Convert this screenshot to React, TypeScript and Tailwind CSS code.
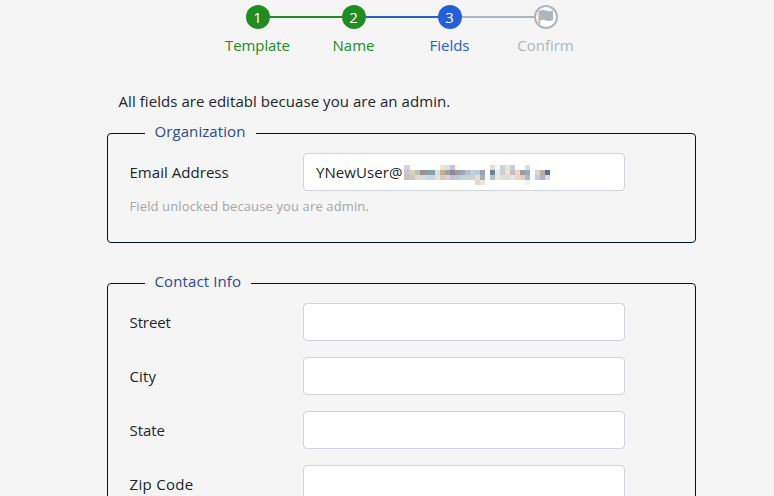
import React from "react";

const mosaic: string[][] = [
  ["#d6cfe0", "", "", "", "", "", "", "#f1e3cc", "#cfe3f3", "#cbc1d0", "#f5fcff", "", "", "", "", "", "", "#e9ddd1", "#fdf6ea", "#c5d5dc", "#e3e3ea", "#c8ced9", "", "", "#cfe3ef", "", "", "", ""],
  ["#c9c5cb", "#dfd2b3", "#b6c2b4", "#a18f8a", "#8b9cac", "#8f9fad", "#d3e2e6", "#c5b094", "#a1a09e", "#8f8896", "#ab9799", "#9aa7c3", "#b2bfcb", "#c6cdd4", "#b5cfdf", "#98a3ad", "", "#6d8091", "#e4edf7", "#cbd3d0", "#f1e3d6", "#c9bcc2", "#e6dad0", "#a39b93", "#9aa9be", "", "#d0d6da", "#c2aba4", "#5b7090"],
  ["#c3bfc2", "#cbc5c3", "#e3dbd3", "#dfd9d9", "#c5d9ed", "#cbd8e4", "#eae4d8", "#dacbb5", "#d1d4dc", "#c8bdd3", "#b8cae1", "#c3d2df", "#cbd2d6", "#c9d2d8", "#e5dfdc", "#a7b1bc", "#f6fbfb", "#b7c3c6", "#e3e8ef", "#e2ddd5", "#dfdcd5", "#e6e6ea", "#f1d3ba", "#ddd0c5", "#acb8cb", "#f6fbff", "#c5cddc", "#b5aec4", "#d8dde4"],
  ["", "", "", "", "", "", "", "", "", "", "", "", "", "", "#e2d9d5", "#f0e4d8", "", "", "", "", "", "", "", "", "#f7f1ed", "", "", "", ""],
];

function Redacted() {
  return (
    <div className="mt-[5px] grid grid-cols-[6px_repeat(28,5px)] grid-rows-[repeat(4,5px)]">
      {mosaic.flat().map((color, i) => (
        <span key={i} style={{ backgroundColor: color || "transparent" }} />
      ))}
    </div>
  );
}

function Flag() {
  return (
    <svg width="16" height="16" viewBox="0 0 16 16" fill="#adb5bd" className="shrink-0">
      <path d="M0 1h1.300v14.500H0z" fill="#dfc6b8" />
      <path d="M1.200 2C4 .7 6.500 1 8.500 1.800c2.200.8 4.200.4 6.500-.6v9.800c-2.300 1.200-4.300 1.200-6.500.4-2-.8-4.500-.8-6.300 0v4H1.200z" />
    </svg>
  );
}

function Step({ label, color, before, after, children }: { label: string; color: string; before: string; after: string; children: React.ReactNode }) {
  return (
    <li className={"flex w-24 flex-col items-center " + color}>
      <div className="flex w-full items-center">
        <span className={"h-0.5 flex-1 " + before} />
        {children}
        <span className={"h-0.5 flex-1 " + after} />
      </div>
      <span className="mt-1 text-[15px] leading-6">{label}</span>
    </li>
  );
}

function Field({ label, labelClass, children }: { label: string; labelClass: string; children?: React.ReactNode }) {
  return (
    <div className="flex h-[38px] items-center">
      <label className={"w-[174px] shrink-0 " + labelClass}>{label}</label>
      <div className="flex h-[38px] w-[322px] items-center rounded border border-[#ced4da] bg-white pl-3">{children}</div>
    </div>
  );
}

export default function App() {
  const dot = "flex size-6 shrink-0 items-center justify-center rounded-full text-[15px] leading-6 text-white ";
  return (
    <main className="h-[496px] w-[774px] overflow-hidden bg-[#f5f5f5] pt-[5px] font-['Open_Sans','Noto_Sans',sans-serif] text-[15px] leading-6 text-[#212529]">
      <ol className="ml-[209.5px] flex">
        <Step label="Template" color="text-[#228b22] tracking-[-0.1px]" before="bg-transparent" after="bg-[#228b22]">
          <span className={dot + "bg-[#228b22]"}>1</span>
        </Step>
        <Step label="Name" color="text-[#228b22]" before="bg-[#228b22]" after="bg-[#2360d7]">
          <span className={dot + "bg-[#228b22]"}>2</span>
        </Step>
        <Step label="Fields" color="text-[#2360d7]" before="bg-[#2360d7]" after="bg-[#adb5bd]">
          <span className={dot + "bg-[#2360d7]"}>3</span>
        </Step>
        <Step label="Confirm" color="text-[#adb5bd]" before="bg-[#adb5bd]" after="bg-transparent">
          <span className="flex size-6 shrink-0 items-center justify-center rounded-full border-2 border-[#adb5bd] bg-white">
            <Flag />
          </span>
        </Step>
      </ol>
      <p className="mt-8 ml-[118.5px] whitespace-nowrap tracking-[0.06px]">All fields are editabl becuase you are an admin.</p>
      <fieldset className="mt-2 ml-[107px] h-[122px] w-[589px] rounded border border-[#001529] pl-[21px]">
        <legend className="ml-4 h-6 w-[111px] pl-[9.500px] leading-5 tracking-[0.08px] text-[#2b4a8b]">Organization</legend>
        <div className="mt-2">
          <Field label="Email Address" labelClass="tracking-[0.04px] pl-[0.5px]">
            <span className="w-[88px] tracking-[0.08px]">YNewUser@</span>
            <Redacted />
          </Field>
          <p className="mt-[5px] pl-[0.5px] text-[13px] leading-5 tracking-[0.12px] text-[#a6a6a6]">Field unlocked because you are admin.</p>
        </div>
      </fieldset>
      <fieldset className="mt-7 ml-[107px] h-[400px] w-[589px] rounded border border-[#001529] pl-[21px]">
        <legend className="ml-4 h-6 w-[106px] pl-[9.500px] leading-5 tracking-[0.12px] text-[#2b4a8b]">Contact Info</legend>
        <div className="mt-2 flex flex-col gap-4">
          <Field label="Street" labelClass="tracking-[-0.1px] pl-[0.5px]" />
          <Field label="City" labelClass="tracking-[0.15px] pl-[0.5px]" />
          <Field label="State" labelClass="tracking-[-0.05px] pl-[0.5px]" />
          <Field label="Zip Code" labelClass="tracking-[0.32px] pl-[0.5px]" />
        </div>
      </fieldset>
    </main>
  );
}
